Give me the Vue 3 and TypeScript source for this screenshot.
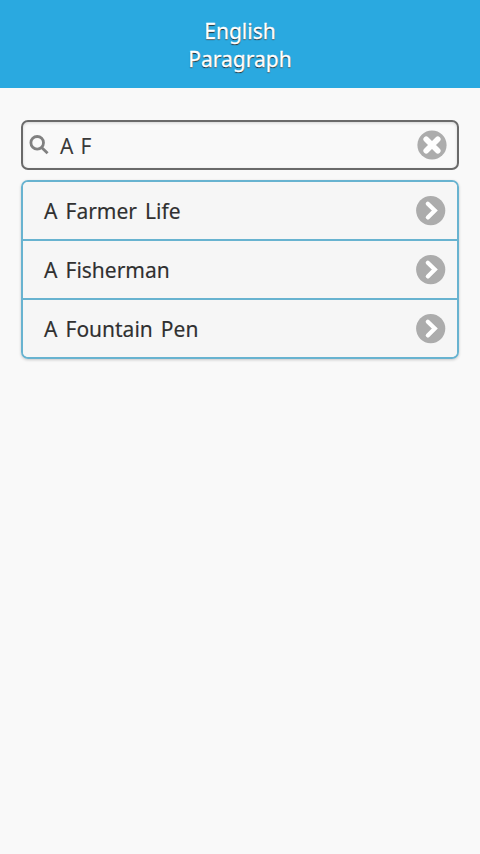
<script setup lang="ts">
import { ref } from 'vue'

const query = ref('A F')
const items: string[] = ['A Farmer Life', 'A Fisherman', 'A Fountain Pen']
</script>

<template>
  <div class="page">
    <header class="header">
      <h1 class="title">English<br />Paragraph</h1>
    </header>
    <main class="content">
      <div class="search">
        <svg class="lens" viewBox="0 0 20 20">
          <circle cx="8.2" cy="7.8" r="6.3" />
          <path d="M12.6 12.4 18.6 18.2" />
        </svg>
        <span class="query">{{ query }}</span>
        <svg class="round" viewBox="0 0 30 30">
          <circle cx="15" cy="15" r="14.6" />
          <path class="cross" d="M9.2 9.2 20.8 20.8M20.8 9.2 9.2 20.8" />
        </svg>
      </div>
      <ul class="list">
        <li v-for="item in items" :key="item" class="row">
          <span class="label">{{ item }}</span>
          <svg class="round" viewBox="0 0 30 30">
            <circle cx="14.7" cy="14.6" r="14.6" />
            <path d="M11.8 7.8 18.8 14.6 11.8 21.4" />
          </svg>
        </li>
      </ul>
    </main>
  </div>
</template>

<style>
body {
  background: #f9f9f9;
}
</style>

<style scoped>
.page {
  min-height: 854px;
  background: #f9f9f9;
  color: #3a3a3a;
  font-family: 'Noto Sans', sans-serif;
  font-size: 21px;
}
.header {
  box-sizing: border-box;
  height: 88px;
  padding-top: 17px;
  background: #2aa9e0;
}
.title {
  margin: 0;
  color: #fff;
  font-size: 21px;
  font-weight: 400;
  line-height: 28px;
  text-align: center;
  text-shadow: 0 1px 1px #222;
  -webkit-text-stroke: 0.3px #fff;
}
.content {
  padding: 32px 21px 0;
}
.search {
  display: flex;
  align-items: center;
  box-sizing: border-box;
  height: 50px;
  padding: 0 10px 0 6px;
  border: 2px solid #6a6a6a;
  border-radius: 7px;
  box-shadow: inset 0 1px 3px rgba(0, 0, 0, 0.15);
}
.lens {
  width: 20px;
  height: 20px;
  fill: none;
  stroke: #808080;
  stroke-width: 2.8;
}
.query {
  flex: 1;
  margin-left: 11px;
  padding-top: 1px;
  word-spacing: 1.5px;
}
.label {
  color: #303030;
  word-spacing: 2.6px;
  -webkit-text-stroke: 0.15px #303030;
}
.round {
  width: 30px;
  height: 30px;
  fill: #acacac;
}
.round path {
  fill: none;
  stroke: #fff;
  stroke-width: 4.2;
  stroke-linecap: round;
}
.round .cross {
  stroke-width: 5.6;
}
.list {
  margin: 10px 0 0;
  padding: 0;
  overflow: hidden;
  list-style: none;
  border: 2px solid #68b3d0;
  border-radius: 7px;
  box-shadow: 0 1px 3px rgba(0, 0, 0, 0.2);
}
.row {
  display: flex;
  align-items: center;
  justify-content: space-between;
  height: 57px;
  padding: 0 11px 0 21px;
  background: #f6f6f6;
}
.row + .row {
  border-top: 2px solid #68b3d0;
}
</style>
